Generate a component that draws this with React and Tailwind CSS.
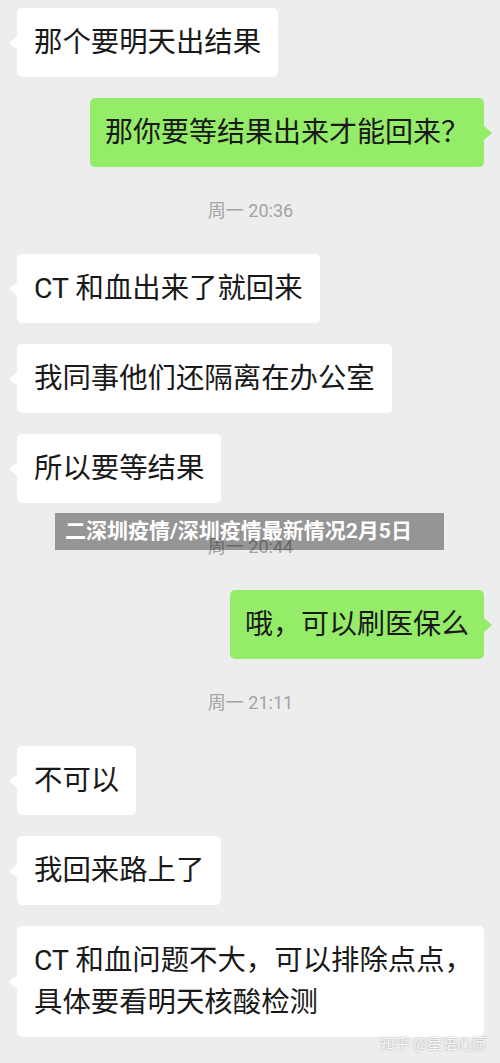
import React from "react";

const font = { fontFamily: "Roboto, 'Noto Sans CJK SC', sans-serif" };

const Left = ({ children, wide }) => (
  <div
    className={
      wide
        ? "relative self-stretch bg-white rounded-[5px] pl-[17px] py-[13.5px] text-[28.4px] leading-[42px] text-[#191919] whitespace-nowrap"
        : "relative self-start bg-white rounded-[5px] px-[17px] py-[13.5px] text-[28.4px] leading-[42px] text-[#191919] whitespace-nowrap"
    }
  >
    <span className="absolute left-[-8px] top-1/2 -translate-y-1/2 w-0 h-0 border-y-[7px] border-y-transparent border-r-[8px] border-r-white" />
    {children}
  </div>
);

const Right = ({ children }) => (
  <div className="relative self-end bg-[#95ec69] rounded-[5px] px-[15px] py-[13.5px] text-[28px] leading-[42px] text-[#191919] whitespace-nowrap">
    <span className="absolute right-[-8px] top-1/2 -translate-y-1/2 w-0 h-0 border-y-[7px] border-y-transparent border-l-[8px] border-l-[#95ec69]" />
    {children}
  </div>
);

const Time = ({ children }) => (
  <div className="h-[45px] flex items-center justify-center text-[18px] text-[#a3a3a3]">{children}</div>
);

export default function App() {
  return (
    <div className="relative w-[500px] h-[1063px] overflow-hidden bg-[#ededed]" style={font}>
      <div className="flex flex-col gap-[21px] pt-[8px] pl-[17px] pr-[16px]">
        <Left>那个要明天出结果</Left>
        <Right>那你要等结果出来才能回来？</Right>
        <Time>周一 20:36</Time>
        <Left>CT 和血出来了就回来</Left>
        <Left>我同事他们还隔离在办公室</Left>
        <Left>所以要等结果</Left>
        <Time>周一 20:44</Time>
        <Right>哦，可以刷医保么</Right>
        <Time>周一 21:11</Time>
        <Left>不可以</Left>
        <Left>我回来路上了</Left>
        <Left wide>
          CT 和血问题不大，可以排除点点，
          <br />
          具体要看明天核酸检测
        </Left>
      </div>

      {/* 标题遮罩 */}
      <div className="absolute left-[55px] top-[513px] w-[389px] h-[37px] bg-black/[0.37] flex items-center pl-[10px] text-white text-[21px] font-bold whitespace-nowrap">
        二深圳疫情/深圳疫情最新情况2月5日
      </div>

      {/* 水印 */}
      <div className="absolute right-[13px] top-[1033px] text-[15px] text-white/90 [text-shadow:0_0_2px_rgba(0,0,0,0.35)] whitespace-nowrap">
        知乎 @星语心愿
      </div>
    </div>
  );
}
